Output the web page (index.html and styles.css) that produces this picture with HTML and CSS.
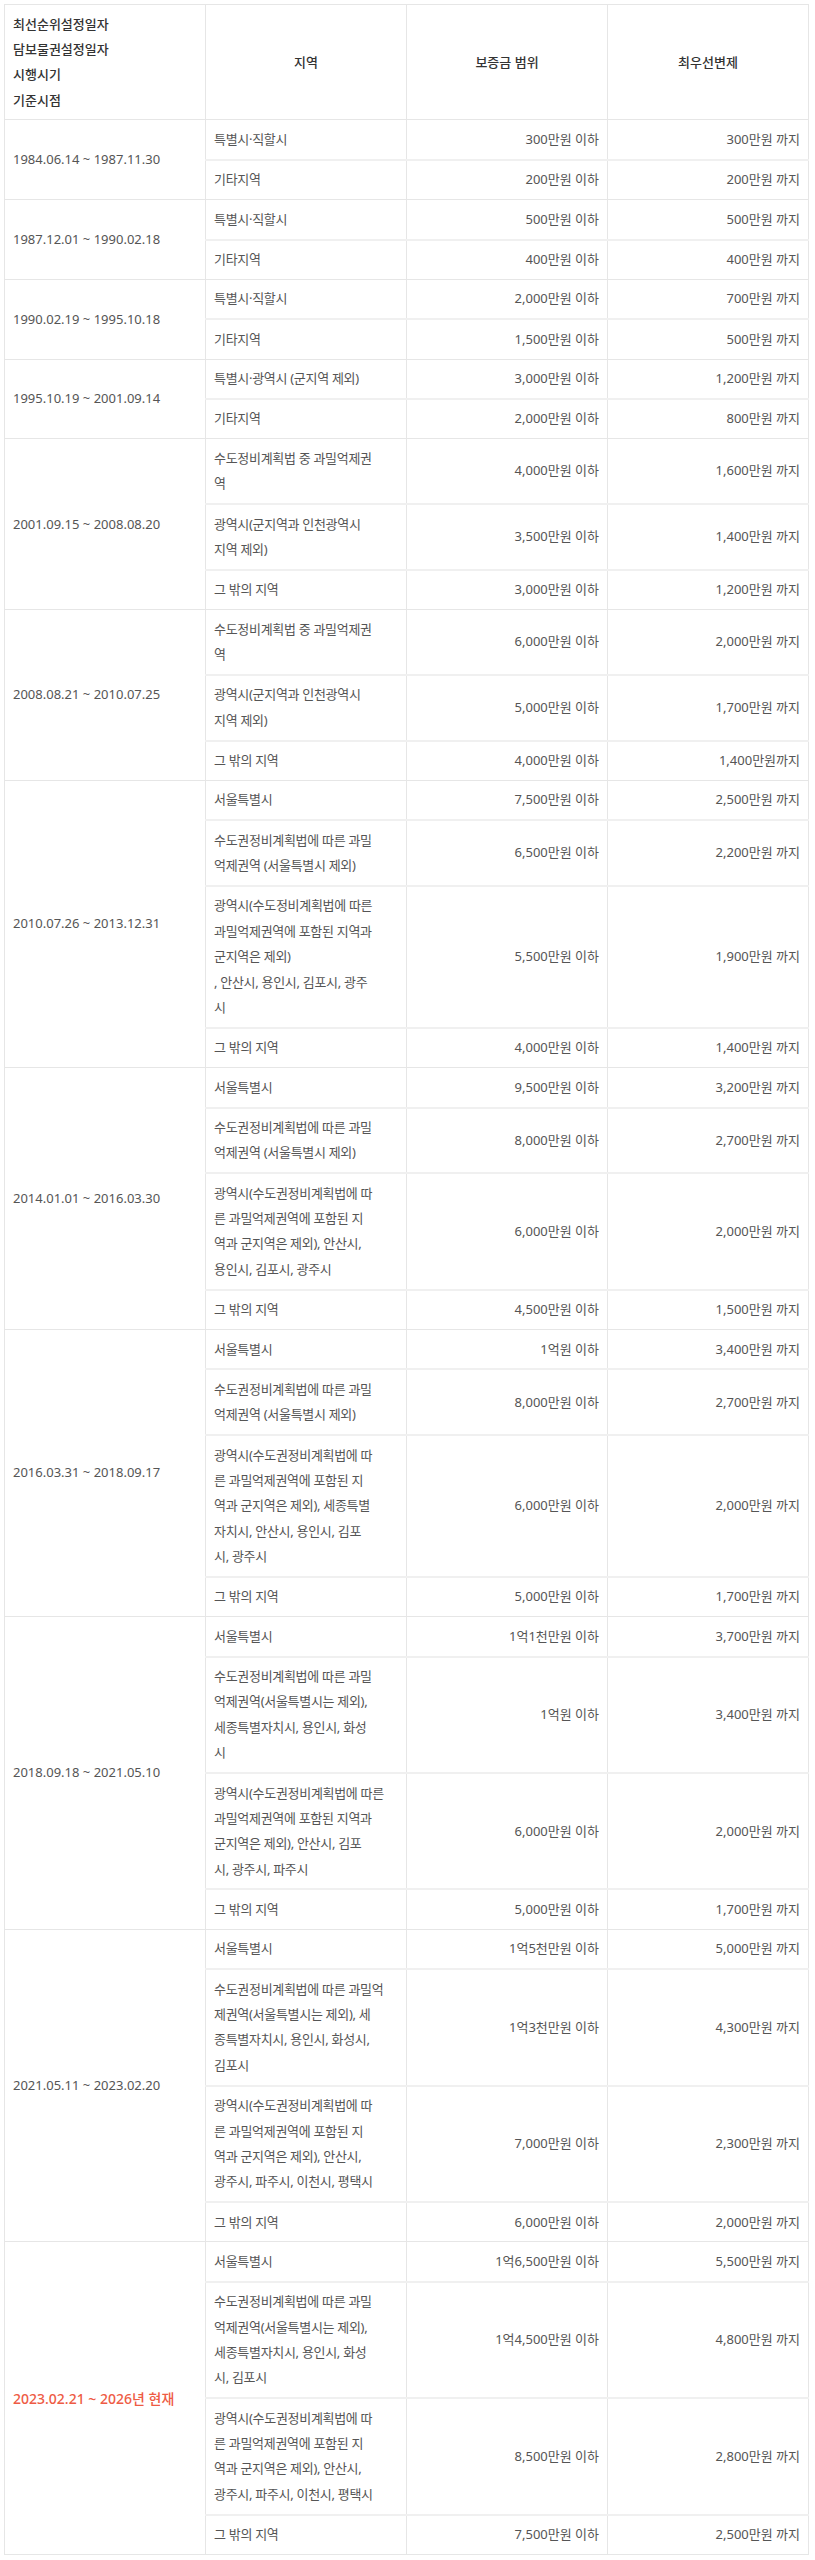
FILE: index.html
```html
<!DOCTYPE html>
<html lang="ko">
<head>
<meta charset="utf-8">
<title>소액임차인 최우선변제금</title>
<link rel="stylesheet" href="styles.css">
</head>
<body>
<table class="rent-table">
  <colgroup>
    <col class="c-date"><col class="c-area"><col class="c-range"><col class="c-pay">
  </colgroup>
  <thead>
    <tr>
      <th class="h-date">최선순위설정일자<br>담보물권설정일자<br>시행시기<br>기준시점</th>
      <th>지역</th>
      <th>보증금 범위</th>
      <th>최우선변제</th>
    </tr>
  </thead>
  <tbody class="grp">
    <tr><td class="date" rowspan="2">1984.06.14 ~ 1987.11.30</td><td class="area">특별시·직할시</td><td class="num">300만원 이하</td><td class="num">300만원 까지</td></tr>
    <tr><td class="area">기타지역</td><td class="num">200만원 이하</td><td class="num">200만원 까지</td></tr>
  </tbody>
  <tbody class="grp">
    <tr><td class="date" rowspan="2">1987.12.01 ~ 1990.02.18</td><td class="area">특별시·직할시</td><td class="num">500만원 이하</td><td class="num">500만원 까지</td></tr>
    <tr><td class="area">기타지역</td><td class="num">400만원 이하</td><td class="num">400만원 까지</td></tr>
  </tbody>
  <tbody class="grp">
    <tr><td class="date" rowspan="2">1990.02.19 ~ 1995.10.18</td><td class="area">특별시·직할시</td><td class="num">2,000만원 이하</td><td class="num">700만원 까지</td></tr>
    <tr><td class="area">기타지역</td><td class="num">1,500만원 이하</td><td class="num">500만원 까지</td></tr>
  </tbody>
  <tbody class="grp">
    <tr><td class="date" rowspan="2">1995.10.19 ~ 2001.09.14</td><td class="area">특별시·광역시 (군지역 제외)</td><td class="num">3,000만원 이하</td><td class="num">1,200만원 까지</td></tr>
    <tr><td class="area">기타지역</td><td class="num">2,000만원 이하</td><td class="num">800만원 까지</td></tr>
  </tbody>
  <tbody class="grp">
    <tr><td class="date" rowspan="3">2001.09.15 ~ 2008.08.20</td><td class="area">수도정비계획법 중 과밀억제권<br>역</td><td class="num">4,000만원 이하</td><td class="num">1,600만원 까지</td></tr>
    <tr><td class="area">광역시(군지역과 인천광역시<br>지역 제외)</td><td class="num">3,500만원 이하</td><td class="num">1,400만원 까지</td></tr>
    <tr><td class="area">그 밖의 지역</td><td class="num">3,000만원 이하</td><td class="num">1,200만원 까지</td></tr>
  </tbody>
  <tbody class="grp">
    <tr><td class="date" rowspan="3">2008.08.21 ~ 2010.07.25</td><td class="area">수도정비계획법 중 과밀억제권<br>역</td><td class="num">6,000만원 이하</td><td class="num">2,000만원 까지</td></tr>
    <tr><td class="area">광역시(군지역과 인천광역시<br>지역 제외)</td><td class="num">5,000만원 이하</td><td class="num">1,700만원 까지</td></tr>
    <tr><td class="area">그 밖의 지역</td><td class="num">4,000만원 이하</td><td class="num">1,400만원까지</td></tr>
  </tbody>
  <tbody class="grp">
    <tr><td class="date" rowspan="4">2010.07.26 ~ 2013.12.31</td><td class="area">서울특별시</td><td class="num">7,500만원 이하</td><td class="num">2,500만원 까지</td></tr>
    <tr><td class="area">수도권정비계획법에 따른 과밀<br>억제권역 (서울특별시 제외)</td><td class="num">6,500만원 이하</td><td class="num">2,200만원 까지</td></tr>
    <tr><td class="area">광역시(수도정비계획법에 따른<br>과밀억제권역에 포함된 지역과<br>군지역은 제외)<br>, 안산시, 용인시, 김포시, 광주<br>시</td><td class="num">5,500만원 이하</td><td class="num">1,900만원 까지</td></tr>
    <tr><td class="area">그 밖의 지역</td><td class="num">4,000만원 이하</td><td class="num">1,400만원 까지</td></tr>
  </tbody>
  <tbody class="grp">
    <tr><td class="date" rowspan="4">2014.01.01 ~ 2016.03.30</td><td class="area">서울특별시</td><td class="num">9,500만원 이하</td><td class="num">3,200만원 까지</td></tr>
    <tr><td class="area">수도권정비계획법에 따른 과밀<br>억제권역 (서울특별시 제외)</td><td class="num">8,000만원 이하</td><td class="num">2,700만원 까지</td></tr>
    <tr><td class="area">광역시(수도권정비계획법에 따<br>른 과밀억제권역에 포함된 지<br>역과 군지역은 제외), 안산시,<br>용인시, 김포시, 광주시</td><td class="num">6,000만원 이하</td><td class="num">2,000만원 까지</td></tr>
    <tr><td class="area">그 밖의 지역</td><td class="num">4,500만원 이하</td><td class="num">1,500만원 까지</td></tr>
  </tbody>
  <tbody class="grp">
    <tr><td class="date" rowspan="4">2016.03.31 ~ 2018.09.17</td><td class="area">서울특별시</td><td class="num">1억원 이하</td><td class="num">3,400만원 까지</td></tr>
    <tr><td class="area">수도권정비계획법에 따른 과밀<br>억제권역 (서울특별시 제외)</td><td class="num">8,000만원 이하</td><td class="num">2,700만원 까지</td></tr>
    <tr><td class="area">광역시(수도권정비계획법에 따<br>른 과밀억제권역에 포함된 지<br>역과 군지역은 제외), 세종특별<br>자치시, 안산시, 용인시, 김포<br>시, 광주시</td><td class="num">6,000만원 이하</td><td class="num">2,000만원 까지</td></tr>
    <tr><td class="area">그 밖의 지역</td><td class="num">5,000만원 이하</td><td class="num">1,700만원 까지</td></tr>
  </tbody>
  <tbody class="grp">
    <tr><td class="date" rowspan="4">2018.09.18 ~ 2021.05.10</td><td class="area">서울특별시</td><td class="num">1억1천만원 이하</td><td class="num">3,700만원 까지</td></tr>
    <tr><td class="area">수도권정비계획법에 따른 과밀<br>억제권역(서울특별시는 제외),<br>세종특별자치시, 용인시, 화성<br>시</td><td class="num">1억원 이하</td><td class="num">3,400만원 까지</td></tr>
    <tr><td class="area">광역시(수도권정비계획법에 따른<br>과밀억제권역에 포함된 지역과<br>군지역은 제외), 안산시, 김포<br>시, 광주시, 파주시</td><td class="num">6,000만원 이하</td><td class="num">2,000만원 까지</td></tr>
    <tr><td class="area">그 밖의 지역</td><td class="num">5,000만원 이하</td><td class="num">1,700만원 까지</td></tr>
  </tbody>
  <tbody class="grp">
    <tr><td class="date" rowspan="4">2021.05.11 ~ 2023.02.20</td><td class="area">서울특별시</td><td class="num">1억5천만원 이하</td><td class="num">5,000만원 까지</td></tr>
    <tr><td class="area">수도권정비계획법에 따른 과밀억<br>제권역(서울특별시는 제외), 세<br>종특별자치시, 용인시, 화성시,<br>김포시</td><td class="num">1억3천만원 이하</td><td class="num">4,300만원 까지</td></tr>
    <tr><td class="area">광역시(수도권정비계획법에 따<br>른 과밀억제권역에 포함된 지<br>역과 군지역은 제외), 안산시,<br>광주시, 파주시, 이천시, 평택시</td><td class="num">7,000만원 이하</td><td class="num">2,300만원 까지</td></tr>
    <tr><td class="area">그 밖의 지역</td><td class="num">6,000만원 이하</td><td class="num">2,000만원 까지</td></tr>
  </tbody>
  <tbody class="grp">
    <tr><td class="date current" rowspan="4">2023.02.21 ~ 2026년 현재</td><td class="area">서울특별시</td><td class="num">1억6,500만원 이하</td><td class="num">5,500만원 까지</td></tr>
    <tr><td class="area">수도권정비계획법에 따른 과밀<br>억제권역(서울특별시는 제외),<br>세종특별자치시, 용인시, 화성<br>시, 김포시</td><td class="num">1억4,500만원 이하</td><td class="num">4,800만원 까지</td></tr>
    <tr><td class="area">광역시(수도권정비계획법에 따<br>른 과밀억제권역에 포함된 지<br>역과 군지역은 제외), 안산시,<br>광주시, 파주시, 이천시, 평택시</td><td class="num">8,500만원 이하</td><td class="num">2,800만원 까지</td></tr>
    <tr><td class="area">그 밖의 지역</td><td class="num">7,500만원 이하</td><td class="num">2,500만원 까지</td></tr>
  </tbody>
</table>
</body>
</html>
```
FILE: styles.css
```css
html, body {
  margin: 0;
  padding: 0;
  background: #ffffff;
}
body {
  padding: 4px 0 0 4px;
  font-family: "Noto Sans", "Noto Sans CJK KR", sans-serif;
  font-size: 13px;
  color: #555555;
}
.rent-table {
  width: 805px;
  border-collapse: collapse;
  table-layout: fixed;
  line-height: 25.36px;
}
.rent-table col {
  width: 25%;
}
.rent-table th,
.rent-table td {
  border: 1px solid #e6e6e6;
  padding: 6.5px 8px 6.5px 8px;
  vertical-align: middle;
  white-space: nowrap;
}
.rent-table th {
  font-weight: 500;
  color: #333333;
  text-align: center;
}
.rent-table th.h-date {
  text-align: left;
}
.rent-table td.area {
  text-align: left;
  letter-spacing: -0.3px;
}
.rent-table td.num {
  text-align: right;
}
.rent-table tbody tr + tr td {
  border-top: 2px solid #f0f0f0;
}
.rent-table td.date {
  text-align: left;
}
.rent-table td.current {
  color: #ee5b44;
  font-size: 14px;
  font-weight: 500;
}
```
